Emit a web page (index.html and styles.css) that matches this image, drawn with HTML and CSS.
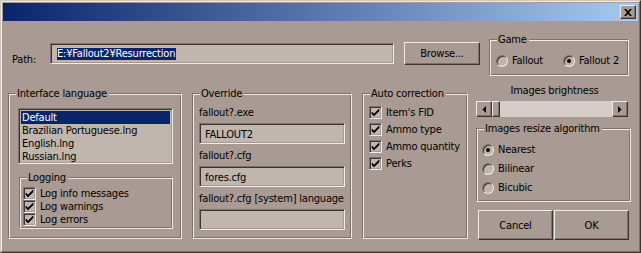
FILE: index.html
```html
<!DOCTYPE html>
<html>
<head>
<meta charset="utf-8">
<link rel="stylesheet" href="styles.css">
</head>
<body>
<div class="window">
  <div class="frame">
    <div class="titlebar">
      <div class="close"><svg width="8" height="7" viewBox="0 0 8 7"><path d="M0 0h2l2 2l2 -2h2l-3 3.5l3 3.5h-2l-2 -2l-2 2h-2l3 -3.5z" fill="#000"/></svg></div>
    </div>
    <div class="client">
      <div class="toprow">
        <span class="pathlabel">Path:</span>
        <div class="edit pathedit"><span class="sel">E:¥Fallout2¥Resurrection</span></div>
        <div class="button browse">Browse...</div>
        <div class="group game">
          <span class="legend">Game</span>
          <div class="radiorow">
            <label class="radio"><span class="rb"></span>Fallout</label>
            <label class="radio"><span class="rb on"></span>Fallout 2</label>
          </div>
        </div>
      </div>
      <div class="mainrow">
        <div class="group lang">
          <span class="legend">Interface language</span>
          <div class="listbox">
            <div class="item selected">Default</div>
            <div class="item">Brazilian Portuguese.lng</div>
            <div class="item">English.lng</div>
            <div class="item">Russian.lng</div>
          </div>
          <div class="group logging">
            <span class="legend">Logging</span>
            <div class="checks tight">
              <label class="check"><span class="cb"><svg width="9" height="9" viewBox="0 0 9 9"><path d="M1 4l2 2l5-5v2l-5 5l-2-2z" fill="#000" stroke="#000" stroke-width="0.6"/></svg></span>Log info messages</label>
              <label class="check"><span class="cb"><svg width="9" height="9" viewBox="0 0 9 9"><path d="M1 4l2 2l5-5v2l-5 5l-2-2z" fill="#000" stroke="#000" stroke-width="0.6"/></svg></span>Log warnings</label>
              <label class="check"><span class="cb"><svg width="9" height="9" viewBox="0 0 9 9"><path d="M1 4l2 2l5-5v2l-5 5l-2-2z" fill="#000" stroke="#000" stroke-width="0.6"/></svg></span>Log errors</label>
            </div>
          </div>
        </div>
        <div class="group override">
          <span class="legend">Override</span>
          <div class="flabel">fallout?.exe</div>
          <div class="edit small">FALLOUT2</div>
          <div class="flabel">fallout?.cfg</div>
          <div class="edit small">fores.cfg</div>
          <div class="flabel">fallout?.cfg [system] language</div>
          <div class="edit small"></div>
        </div>
        <div class="group auto">
          <span class="legend">Auto correction</span>
          <div class="checks loose">
            <label class="check"><span class="cb"><svg width="9" height="9" viewBox="0 0 9 9"><path d="M1 4l2 2l5-5v2l-5 5l-2-2z" fill="#000" stroke="#000" stroke-width="0.6"/></svg></span>Item's FID</label>
            <label class="check"><span class="cb"><svg width="9" height="9" viewBox="0 0 9 9"><path d="M1 4l2 2l5-5v2l-5 5l-2-2z" fill="#000" stroke="#000" stroke-width="0.6"/></svg></span>Ammo type</label>
            <label class="check"><span class="cb"><svg width="9" height="9" viewBox="0 0 9 9"><path d="M1 4l2 2l5-5v2l-5 5l-2-2z" fill="#000" stroke="#000" stroke-width="0.6"/></svg></span>Ammo quantity</label>
            <label class="check"><span class="cb"><svg width="9" height="9" viewBox="0 0 9 9"><path d="M1 4l2 2l5-5v2l-5 5l-2-2z" fill="#000" stroke="#000" stroke-width="0.6"/></svg></span>Perks</label>
          </div>
        </div>
        <div class="rightcol">
          <div class="brightlabel">Images brightness</div>
          <div class="scrollbar">
            <div class="sbtn"><svg width="4" height="7" viewBox="0 0 4 7"><path d="M4 0v7L0.5 3.5z" fill="#000"/></svg></div>
            <div class="thumb"></div>
            <div class="track"></div>
            <div class="sbtn"><svg width="4" height="7" viewBox="0 0 4 7"><path d="M0 0v7L3.5 3.5z" fill="#000"/></svg></div>
          </div>
          <div class="group resize">
            <span class="legend">Images resize algorithm</span>
            <div class="radiocol">
              <label class="radio"><span class="rb on"></span>Nearest</label>
              <label class="radio"><span class="rb"></span>Bilinear</label>
              <label class="radio"><span class="rb"></span>Bicubic</label>
            </div>
          </div>
          <div class="buttons">
            <div class="button big">Cancel</div>
            <div class="button big">OK</div>
          </div>
        </div>
      </div>
    </div>
  </div>
</div>
</body>
</html>
```

FILE: styles.css
```css
html, body {
  margin: 0;
  padding: 0;
  background: #a99b93;
}
body {
  font-family: "DejaVu Sans Condensed", "DejaVu Sans", sans-serif;
  font-size: 11px;
  letter-spacing: -0.2px;
  line-height: 13px;
  color: #000;
}
.window {
  width: 641px;
  height: 253px;
  box-sizing: border-box;
  border: 1px solid;
  border-color: #cfc6c1 #3c3430 #3c3430 #cfc6c1;
  background: #a99b93;
}
.frame {
  height: 100%;
  box-sizing: border-box;
  border: 1px solid;
  border-color: #f0ebe8 #7d716b #7d716b #f0ebe8;
  padding: 1px;
  display: flex;
  flex-direction: column;
}
.titlebar {
  height: 18px;
  flex: none;
  background: linear-gradient(to right, #0a246a, #a6caf0);
  display: flex;
  justify-content: flex-end;
  align-items: flex-start;
  padding: 2px 2px 0 0;
  box-sizing: border-box;
}
.close {
  width: 16px;
  height: 14px;
  box-sizing: border-box;
  background: #a99b93;
  border: 1px solid;
  border-color: #f0ebe8 #3c3430 #3c3430 #f0ebe8;
  box-shadow: inset -1px -1px 0 #7d716b;
  display: flex;
  align-items: center;
  justify-content: center;
}
.client {
  flex: 1;
  display: flex;
  flex-direction: column;
}
.toprow {
  display: flex;
  align-items: flex-start;
  margin-top: 18px;
  height: 36px;
  padding-left: 9px;
}
.pathlabel {
  margin-top: 14px;
  width: 38px;
  flex: none;
}
.edit {
  box-sizing: border-box;
  background: #c1b6ad;
  border: 1px solid;
  border-color: #7d716b #f0ebe8 #f0ebe8 #7d716b;
  box-shadow: inset 1px 1px 0 #3c3430, inset -1px -1px 0 #a99b93;
  white-space: nowrap;
  overflow: hidden;
}
.pathedit {
  width: 344px;
  height: 21px;
  margin-top: 4px;
  padding: 3px 0 0 6px;
}
.sel {
  background: #0a246a;
  color: #fff;
  display: inline-block;
  line-height: 12px;
  padding-right: 1px;
}
.button {
  box-sizing: border-box;
  background: #a99b93;
  border: 1px solid;
  border-color: #f0ebe8 #3c3430 #3c3430 #f0ebe8;
  box-shadow: inset -1px -1px 0 #7d716b;
  display: flex;
  align-items: center;
  justify-content: center;
}
.browse {
  width: 76px;
  height: 23px;
  margin-top: 3px;
  margin-left: 10px;
}
.group {
  position: relative;
  box-sizing: border-box;
  border: 1px solid;
  border-color: #7d716b #f0ebe8 #f0ebe8 #7d716b;
  box-shadow: inset 1px 1px 0 #f0ebe8, inset -1px -1px 0 #7d716b;
}
.legend {
  position: absolute;
  top: -7px;
  left: 7px;
  padding: 0 2px 0 1px;
  background: #a99b93;
  white-space: nowrap;
}
.game {
  width: 140px;
  height: 37px;
  margin-left: 9px;
}
.radiorow {
  display: flex;
  padding: 14px 0 0 6px;
  gap: 0;
}
.radiorow .radio:first-child { width: 67px; }
.radio {
  display: flex;
  align-items: center;
  height: 13px;
  white-space: nowrap;
}
.rb {
  width: 12px;
  height: 12px;
  box-sizing: border-box;
  border-radius: 50%;
  border: 1px solid;
  border-color: #7d716b #f0ebe8 #f0ebe8 #7d716b;
  box-shadow: inset 1px 1px 0 #3c3430;
  background: #c1b6ad;
  margin-right: 4px;
  display: flex;
  align-items: center;
  justify-content: center;
  flex: none;
}
.rb.on::after {
  content: "";
  width: 4px;
  height: 4px;
  border-radius: 50%;
  background: #000;
}
.mainrow {
  display: flex;
  align-items: flex-start;
  margin-top: 9px;
  padding-left: 5px;
}
.lang {
  width: 174px;
  height: 146px;
  margin-top: 9px;
  padding: 14px 0 0 9px;
}
.listbox {
  width: 155px;
  height: 56px;
  box-sizing: border-box;
  background: #c1b6ad;
  border: 1px solid;
  border-color: #7d716b #f0ebe8 #f0ebe8 #7d716b;
  box-shadow: inset 1px 1px 0 #3c3430, inset -1px -1px 0 #a99b93;
  padding: 2px 2px 0 2px;
}
.item {
  height: 13px;
  padding-left: 1px;
  white-space: nowrap;
}
.item.selected {
  background: #0a246a;
  color: #fff;
}
.logging {
  width: 154px;
  height: 52px;
  margin-top: 13px;
  margin-left: 1px;
  padding: 9px 0 0 3px;
}
.checks { display: flex; flex-direction: column; }
.check {
  display: flex;
  align-items: center;
  height: 13px;
  white-space: nowrap;
}
.checks.loose { gap: 4px; }
.cb {
  width: 13px;
  height: 13px;
  box-sizing: border-box;
  background: #c1b6ad;
  border: 1px solid;
  border-color: #7d716b #f0ebe8 #f0ebe8 #7d716b;
  box-shadow: inset 1px 1px 0 #3c3430, inset -1px -1px 0 #a99b93;
  margin-right: 4px;
  display: flex;
  align-items: center;
  justify-content: center;
  flex: none;
}
.override {
  width: 160px;
  height: 146px;
  margin-top: 9px;
  margin-left: 10px;
  padding: 12px 0 0 6px;
}
.flabel {
  height: 13px;
  white-space: nowrap;
}
.edit.small {
  width: 146px;
  height: 21px;
  margin: 4px 0 5px 0;
  padding: 4px 0 0 5px;
}
.auto {
  width: 106px;
  height: 146px;
  margin-top: 9px;
  margin-left: 10px;
  padding: 12px 0 0 6px;
}
.rightcol {
  width: 155px;
  margin-left: 8px;
  display: flex;
  flex-direction: column;
}
.brightlabel {
  text-align: center;
  height: 13px;
  padding-left: 2px;
}
.scrollbar {
  display: flex;
  height: 16px;
  margin-top: 4px;
  width: 152px;
}
.sbtn {
  width: 16px;
  height: 16px;
  box-sizing: border-box;
  background: #a99b93;
  border: 1px solid;
  border-color: #f0ebe8 #3c3430 #3c3430 #f0ebe8;
  box-shadow: inset -1px -1px 0 #7d716b;
  display: flex;
  align-items: center;
  justify-content: center;
  flex: none;
}
.thumb {
  width: 8px;
  height: 16px;
  box-sizing: border-box;
  background: #a99b93;
  border: 1px solid;
  border-color: #f0ebe8 #3c3430 #3c3430 #f0ebe8;
  box-shadow: inset -1px -1px 0 #7d716b;
  flex: none;
}
.track {
  flex: 1;
  background: #d6cdc8;
}
.resize {
  width: 155px;
  height: 74px;
  margin-top: 11px;
  padding: 14px 0 0 5px;
}
.radiocol {
  display: flex;
  flex-direction: column;
  gap: 6px;
}
.buttons {
  display: flex;
  margin-top: 8px;
  margin-left: 2px;
  gap: 1px;
}
.button.big {
  width: 75px;
  height: 30px;
}
```
